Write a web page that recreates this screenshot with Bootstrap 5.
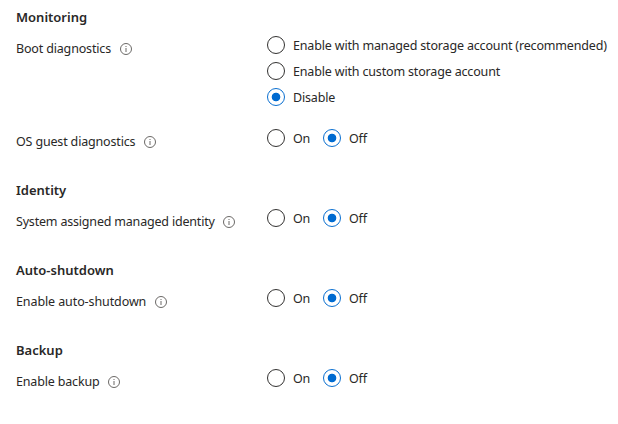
<!DOCTYPE html>
<html lang="en">
<head>
<meta charset="utf-8">
<meta name="viewport" content="width=device-width, initial-scale=1">
<title>Management</title>
<link href="https://cdn.jsdelivr.net/npm/bootstrap@5.3.0/dist/css/bootstrap.min.css" rel="stylesheet">
<style>
body{font-family:"Segoe UI","Noto Sans","Open Sans",sans-serif;font-size:12.5px;line-height:20px;letter-spacing:-.165px;color:#292827;background:#fff;overflow:hidden}
.settings{padding:7px 0 0 16px}
.section-title{font-size:13px;font-weight:600;line-height:20px;letter-spacing:0;margin:0 0 5px}
.setting{margin-bottom:29px}
.setting.tight{margin-bottom:15px}
.setting-label{width:251px;padding-top:7px;height:26px}
.t3{letter-spacing:-.19px}
.t4{letter-spacing:-.1px}
.info{width:12px;height:12px;margin-left:8.5px}
.option{height:26px;min-height:0;padding:0;margin:0}
.option label{padding-top:2px}
.option .form-check-input{width:18px;height:18px;margin:0 8px 0 0;float:none;border:1px solid #323130;background-color:#fff;box-shadow:none}
.option .form-check-input:checked{border-color:#0a6fd0;background:radial-gradient(circle,#006bd1 3.9px,transparent 4.7px)}
.on{width:56px}
</style>
</head>
<body>
<main class="settings">
  <section>
    <h2 class="section-title">Monitoring</h2>
    <div class="setting tight d-flex align-items-start">
      <div class="setting-label d-flex align-items-center"><span class="t1">Boot diagnostics</span><svg class="info" viewBox="0 0 12 12"><circle cx="6" cy="6" r="5.5" fill="none" stroke="#6b6967"/><path d="M6 5v4M6 3v1" stroke="#6b6967"/></svg></div>
      <div>
        <div class="form-check option d-flex align-items-center"><input class="form-check-input" type="radio" name="boot" id="b1"><label for="b1" class="text-nowrap">Enable with managed storage account (recommended)</label></div>
        <div class="form-check option d-flex align-items-center"><input class="form-check-input" type="radio" name="boot" id="b2"><label for="b2" class="text-nowrap">Enable with custom storage account</label></div>
        <div class="form-check option d-flex align-items-center"><input class="form-check-input" type="radio" name="boot" id="b3" checked><label for="b3">Disable</label></div>
      </div>
    </div>
    <div class="setting d-flex align-items-start">
      <div class="setting-label d-flex align-items-center"><span class="t2">OS guest diagnostics</span><svg class="info" viewBox="0 0 12 12"><circle cx="6" cy="6" r="5.5" fill="none" stroke="#6b6967"/><path d="M6 5v4M6 3v1" stroke="#6b6967"/></svg></div>
      <div class="d-flex">
        <div class="form-check option on d-flex align-items-center"><input class="form-check-input" type="radio" name="os" id="os1"><label for="os1">On</label></div>
        <div class="form-check option d-flex align-items-center"><input class="form-check-input" type="radio" name="os" id="os2" checked><label for="os2">Off</label></div>
      </div>
    </div>
  </section>
  <section>
    <h2 class="section-title">Identity</h2>
    <div class="setting d-flex align-items-start">
      <div class="setting-label d-flex align-items-center"><span class="t3">System assigned managed identity</span><svg class="info" viewBox="0 0 12 12"><circle cx="6" cy="6" r="5.5" fill="none" stroke="#6b6967"/><path d="M6 5v4M6 3v1" stroke="#6b6967"/></svg></div>
      <div class="d-flex">
        <div class="form-check option on d-flex align-items-center"><input class="form-check-input" type="radio" name="id" id="id1"><label for="id1">On</label></div>
        <div class="form-check option d-flex align-items-center"><input class="form-check-input" type="radio" name="id" id="id2" checked><label for="id2">Off</label></div>
      </div>
    </div>
  </section>
  <section>
    <h2 class="section-title">Auto-shutdown</h2>
    <div class="setting d-flex align-items-start">
      <div class="setting-label d-flex align-items-center"><span class="t4">Enable auto-shutdown</span><svg class="info" viewBox="0 0 12 12"><circle cx="6" cy="6" r="5.5" fill="none" stroke="#6b6967"/><path d="M6 5v4M6 3v1" stroke="#6b6967"/></svg></div>
      <div class="d-flex">
        <div class="form-check option on d-flex align-items-center"><input class="form-check-input" type="radio" name="as" id="as1"><label for="as1">On</label></div>
        <div class="form-check option d-flex align-items-center"><input class="form-check-input" type="radio" name="as" id="as2" checked><label for="as2">Off</label></div>
      </div>
    </div>
  </section>
  <section>
    <h2 class="section-title">Backup</h2>
    <div class="setting d-flex align-items-start">
      <div class="setting-label d-flex align-items-center"><span class="t5">Enable backup</span><svg class="info" viewBox="0 0 12 12"><circle cx="6" cy="6" r="5.5" fill="none" stroke="#6b6967"/><path d="M6 5v4M6 3v1" stroke="#6b6967"/></svg></div>
      <div class="d-flex">
        <div class="form-check option on d-flex align-items-center"><input class="form-check-input" type="radio" name="bk" id="bk1"><label for="bk1">On</label></div>
        <div class="form-check option d-flex align-items-center"><input class="form-check-input" type="radio" name="bk" id="bk2" checked><label for="bk2">Off</label></div>
      </div>
    </div>
  </section>
</main>
<script src="https://cdn.jsdelivr.net/npm/bootstrap@5.3.0/dist/js/bootstrap.bundle.min.js"></script>
</body>
</html>
